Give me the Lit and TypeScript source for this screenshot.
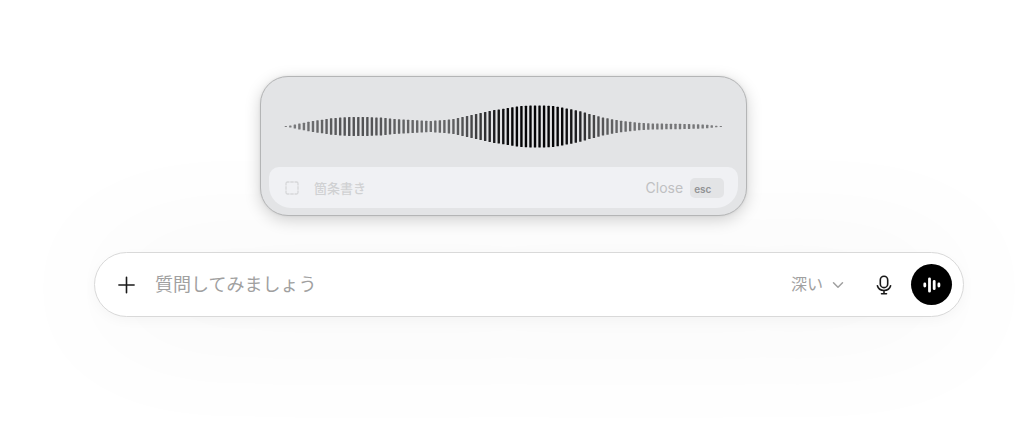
import { LitElement, html, css, svg } from "lit";
import { customElement } from "lit/decorators.js";

/** Loudness envelope: [position, bar height] pairs, joined by straight lines. */
const ENVELOPE: [number, number][] = [
  [0, 1], [4, 2], [14, 6], [24, 10], [34, 13], [44, 16], [54, 18], [66, 19],
  [80, 19], [94, 18], [109, 15], [126, 13], [144, 11], [158, 13], [168, 15],
  [177, 19], [193, 26], [209, 33], [222, 37], [234, 41], [244, 42], [258, 42],
  [267, 41], [276, 38], [284, 35], [294, 31], [304, 25], [317, 18], [334, 12],
  [351, 8], [369, 6], [404, 5], [419, 4], [427, 2], [435, 1],
];
const BAR_COUNT = 97;
const SPAN = 435;

function heightAt(x: number): number {
  for (let i = 1; i < ENVELOPE.length; i++) {
    const [x0, h0] = ENVELOPE[i - 1];
    const [x1, h1] = ENVELOPE[i];
    if (x <= x1) return h0 + ((h1 - h0) * (x - x0)) / (x1 - x0);
  }
  return 1;
}

@customElement("voice-wave")
class VoiceWave extends LitElement {
  static styles = css`
    :host { display: block; }
    .wave { display: block; width: 100%; height: 44px; }
  `;

  render() {
    const bars = Array.from({ length: BAR_COUNT }, (_, i) => {
      const x = (i * SPAN) / (BAR_COUNT - 1);
      const h = heightAt(x);
      const opacity = Math.min(1, 0.46 + Math.pow(h / 38, 1.5) * 0.54);
      return svg`<rect x=${x} y=${21.5 - h / 2} width="2.4" height=${h} rx="0.5" fill="#050507" fill-opacity=${opacity}></rect>`;
    });
    return html`<svg class="wave" viewBox="0 0 438 44" role="img" aria-label="音声波形">${bars}</svg>`;
  }
}

@customElement("voice-panel")
class VoicePanel extends LitElement {
  static styles = css`
    :host { display: block; }
    .panel {
      box-sizing: border-box;
      padding: 28px 8px 7px;
      border: 1px solid #b4b5b6;
      border-radius: 28px;
      background: #e3e4e6;
      box-shadow: 0 4px 16px rgba(0, 0, 0, 0.18), 0 0 3px rgba(0, 0, 0, 0.08);
    }
    .wave { margin: 0 15px 18px; }
    .bar {
      display: flex;
      align-items: center;
      height: 41px;
      box-sizing: border-box;
      padding: 0 14px 0 16px;
      border-radius: 10px 10px 22px 22px;
      background: #f0f1f4;
    }
    .mode {
      display: flex;
      align-items: center;
      gap: 15px;
      color: #d0d1d3;
      font: 500 13px/20px "Noto Sans CJK JP", sans-serif;
    }
    .close {
      display: flex;
      align-items: center;
      gap: 7px;
      margin-left: auto;
      padding: 0;
      border: 0;
      background: none;
      color: #bfc0c2;
      font: 400 14px/20px Inter, sans-serif;
    }
    .key {
      box-sizing: border-box;
      width: 34px;
      height: 20px;
      padding-left: 4px;
      border-radius: 5px;
      background: #e3e4e6;
      color: #929395;
      font: 600 10px/22px Inter, sans-serif;
      text-align: left;
    }
  `;

  render() {
    return html`
      <section class="panel">
        <voice-wave class="wave"></voice-wave>
        <div class="bar">
          <span class="mode">
            <svg width="14" height="14" viewBox="0 0 14 14" fill="none" stroke="#d6d7d9" stroke-width="1.3" aria-hidden="true">
              <path d="M1 4.500V2.500A1.500 1.500 0 0 1 2.500 1H4.500M5.300 1h3.400M9.500 1h2A1.500 1.500 0 0 1 13 2.500V4.500M13 5.300v3.400M13 9.500v2A1.500 1.500 0 0 1 11.500 13h-2M8.700 13H5.300M4.500 13h-2A1.500 1.500 0 0 1 1 11.500v-2M1 8.700V5.300" />
            </svg>
            箇条書き
          </span>
          <button class="close" type="button">Close <kbd class="key">esc</kbd></button>
        </div>
      </section>
    `;
  }
}

@customElement("prompt-box")
class PromptBox extends LitElement {
  static styles = css`
    :host { display: block; }
    .box {
      display: flex;
      align-items: center;
      box-sizing: border-box;
      height: 65px;
      padding: 0 11px 0 20px;
      border: 1px solid #d9d9d9;
      border-radius: 33px;
      background: #fff;
      box-shadow: 0 4px 12px rgba(0, 0, 0, 0.03), 0 4px 140px rgba(0, 0, 0, 0.05);
    }
    button {
      display: grid;
      place-items: center;
      flex: none;
      padding: 0;
      border: 0;
      background: none;
      color: #1a1a1a;
    }
    .add { width: 24px; height: 24px; }
    .input {
      flex: 1;
      min-width: 0;
      height: 28px;
      margin: 0 0 4px 16px;
      padding: 0;
      border: 0;
      outline: 0;
      background: none;
      color: #222;
      font: 400 18px/28px "Noto Sans CJK JP", sans-serif;
    }
    .input::placeholder { color: #a0a0a0; opacity: 1; }
    .depth {
      display: flex;
      align-items: center;
      gap: 9px;
      color: #a0a0a0;
      font: 400 16px/24px "Noto Sans CJK JP", sans-serif;
    }
    .depth-label { margin-bottom: 4px; }
    .mic { width: 24px; height: 24px; margin-left: 28px; }
    .voice {
      width: 41px;
      height: 41px;
      margin-left: 15px;
      border-radius: 50%;
      background: #000;
      color: #fff;
    }
  `;

  render() {
    return html`
      <form class="box">
        <button class="add" type="button" aria-label="追加">
          <svg width="18" height="18" viewBox="0 0 18 18" fill="none" stroke="currentColor" stroke-width="1.6" stroke-linecap="round">
            <path d="M8.500 1.300v15.400M.9 9h15.200" />
          </svg>
        </button>
        <input class="input" type="text" aria-label="質問" placeholder="質問してみましょう" />
        <button class="depth" type="button">
          <span class="depth-label">深い</span>
          <svg width="12" height="8" viewBox="0 0 12 8" fill="none" stroke="currentColor" stroke-width="1.5" stroke-linecap="round" stroke-linejoin="round" aria-hidden="true">
            <path d="M1.500 1.800 6 6.300l4.500-4.500" />
          </svg>
        </button>
        <button class="mic" type="button" aria-label="音声入力">
          <svg width="16" height="20" viewBox="0 0 16 20" fill="none" stroke="currentColor" stroke-width="1.600" stroke-linecap="round">
            <rect x="4.300" y="1.200" width="7.400" height="11.400" rx="3.700" />
            <path d="M1.400 10.800c.8 3 3.400 4.700 6.600 4.700s5.800-1.700 6.600-4.700M8 15.500v3.100M5.500 18.800h5" />
          </svg>
        </button>
        <button class="voice" type="button" aria-label="音声モード">
          <svg width="18" height="18" viewBox="0 0 18 18" fill="none" stroke="currentColor" stroke-width="2.800" stroke-linecap="round">
            <path d="M1.800 8v2M6.500 2.800v12.400M11.200 5.300v7.400M15.900 8v2" />
          </svg>
        </button>
      </form>
    `;
  }
}

@customElement("app-root")
class AppRoot extends LitElement {
  static styles = css`
    :host {
      display: block;
      box-sizing: border-box;
      min-height: 100vh;
      padding: 76px 60px 40px 94px;
      overflow: hidden;
      background: #fff;
    }
    .stage { display: flex; flex-direction: column; gap: 36px; }
    .panel { position: relative; z-index: 1; width: 56%; margin-left: 166px; }
  `;

  render() {
    return html`
      <main class="stage">
        <voice-panel class="panel"></voice-panel>
        <prompt-box></prompt-box>
      </main>
    `;
  }
}
